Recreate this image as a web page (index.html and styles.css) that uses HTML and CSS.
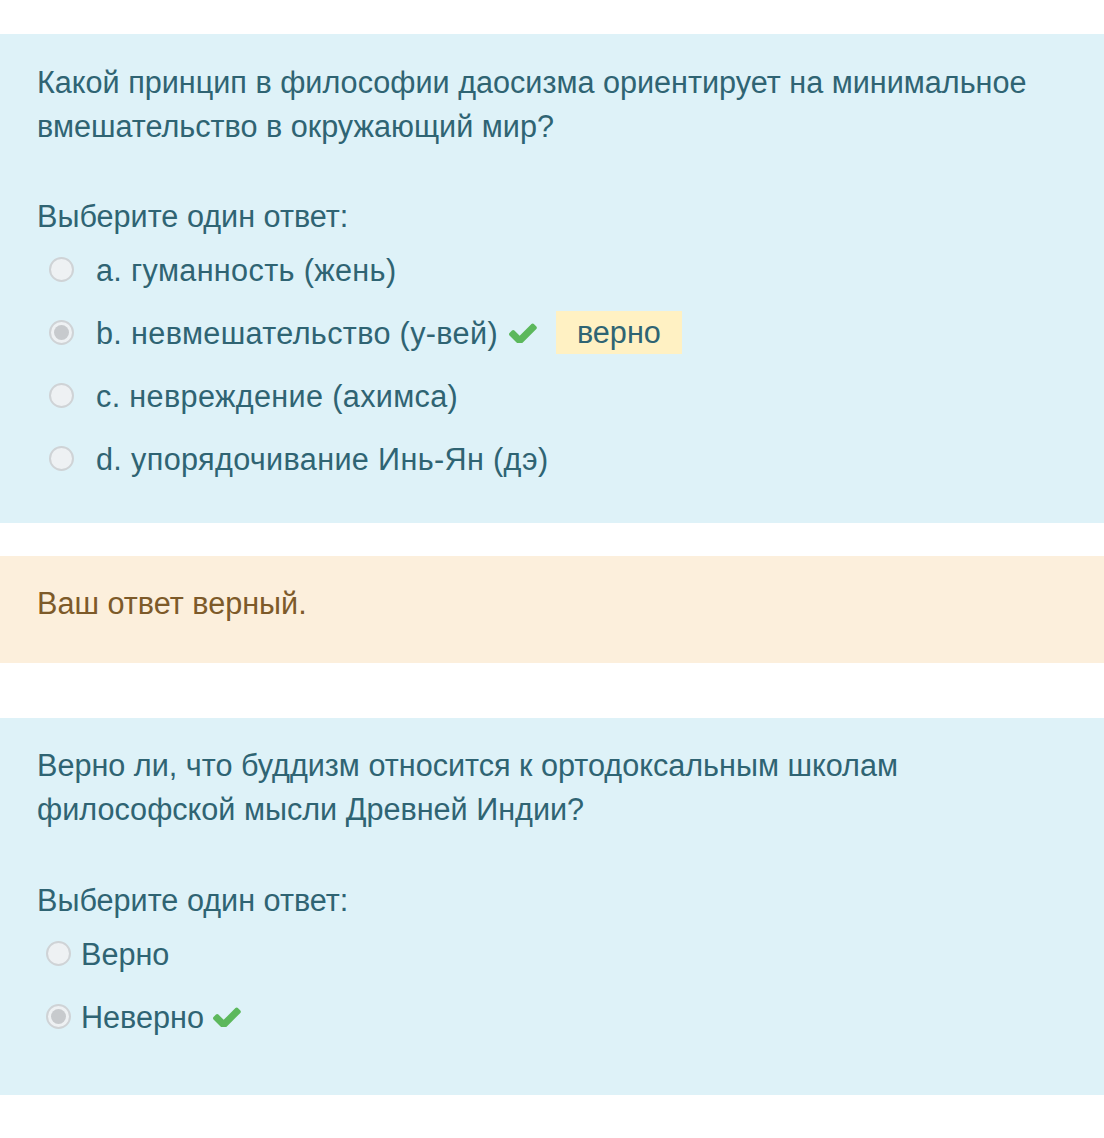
FILE: index.html
```html
<!DOCTYPE html>
<html lang="ru">
<head>
<meta charset="utf-8">
<link rel="stylesheet" href="styles.css">
</head>
<body>
<div class="page">
  <div class="formulation q1">
    <div class="qtext">Какой принцип в философии даосизма ориентирует на минимальное вмешательство в окружающий мир?</div>
    <div class="prompt">Выберите один ответ:</div>
    <div class="answers">
      <div class="opt"><span class="radio"></span><span class="lbl"><span class="letter">a.</span> гуманность (жень)</span></div>
      <div class="opt"><span class="radio checked"></span><span class="lbl"><span class="letter">b.</span> невмешательство (у-вей)</span><svg class="check" viewBox="120 360 1560 1000"><path d="M1671 566q0 40-28 68l-724 724-136 136q-28 28-68 28t-68-28l-136-136-362-362q-28-28-28-68t28-68l136-136q28-28 68-28t68 28l294 295 656-657q28-28 68-28t68 28l136 136q28 28 28 68z"/></svg><span class="badge">верно</span></div>
      <div class="opt"><span class="radio"></span><span class="lbl"><span class="letter">c.</span> невреждение (ахимса)</span></div>
      <div class="opt"><span class="radio"></span><span class="lbl"><span class="letter">d.</span> упорядочивание Инь-Ян (дэ)</span></div>
    </div>
  </div>
  <div class="outcome">Ваш ответ верный.</div>
  <div class="formulation q2">
    <div class="qtext">Верно ли, что буддизм относится к ортодоксальным школам философской мысли Древней Индии?</div>
    <div class="prompt">Выберите один ответ:</div>
    <div class="answers">
      <div class="opt"><span class="radio"></span><span class="lbl">Верно</span></div>
      <div class="opt"><span class="radio checked"></span><span class="lbl">Неверно</span><svg class="check" viewBox="120 360 1560 1000"><path d="M1671 566q0 40-28 68l-724 724-136 136q-28 28-68 28t-68-28l-136-136-362-362q-28-28-28-68t28-68l136-136q28-28 68-28t68 28l294 295 656-657q28-28 68-28t68 28l136 136q28 28 28 68z"/></svg></div>
    </div>
  </div>
</div>
</body>
</html>
```
FILE: styles.css
```css
html, body {
  margin: 0;
  padding: 0;
  background: #ffffff;
}
body {
  font-family: "Liberation Sans", Arial, sans-serif;
  font-size: 30.6px;
  line-height: 44px;
  color: #2f6473;
}
.page {
  padding-top: 34px;
  display: flex;
  flex-direction: column;
}
.formulation {
  background: #def2f8;
  padding: 26px 37px 33px 37px;
}
.q2 {
  margin-top: 55px;
  padding-top: 25px;
  padding-bottom: 47px;
}
.prompt {
  margin-top: 46px;
}
.q2 .prompt {
  margin-top: 47px;
}
.answers {
  display: flex;
  flex-direction: column;
}
.opt {
  height: 63px;
  display: flex;
  align-items: center;
}
.q1 .lbl {
  letter-spacing: 0.35px;
}
.radio {
  box-sizing: border-box;
  width: 25px;
  height: 25px;
  border-radius: 50%;
  border: 2px solid #cfd3d6;
  background: #eef1f3;
  margin-left: 12px;
  margin-right: 22px;
  flex: none;
  display: flex;
  align-items: center;
  justify-content: center;
}
.radio.checked::after {
  content: "";
  width: 15px;
  height: 15px;
  border-radius: 50%;
  background: #c7cacd;
}
.q2 .radio {
  margin-left: 9px;
  margin-right: 10px;
}
.check {
  width: 28px;
  height: 20px;
  fill: #5cb85c;
  margin-left: 11px;
  flex: none;
}
.q2 .check {
  margin-left: 9px;
}
.badge {
  background: #fff1c3;
  color: #2f6473;
  margin-left: 19px;
  padding: 0 21px;
  height: 43px;
  line-height: 43px;
}
.outcome {
  margin-top: 33px;
  background: #fcefdc;
  color: #7d5a29;
  padding: 25px 37px 38px 37px;
}
```
